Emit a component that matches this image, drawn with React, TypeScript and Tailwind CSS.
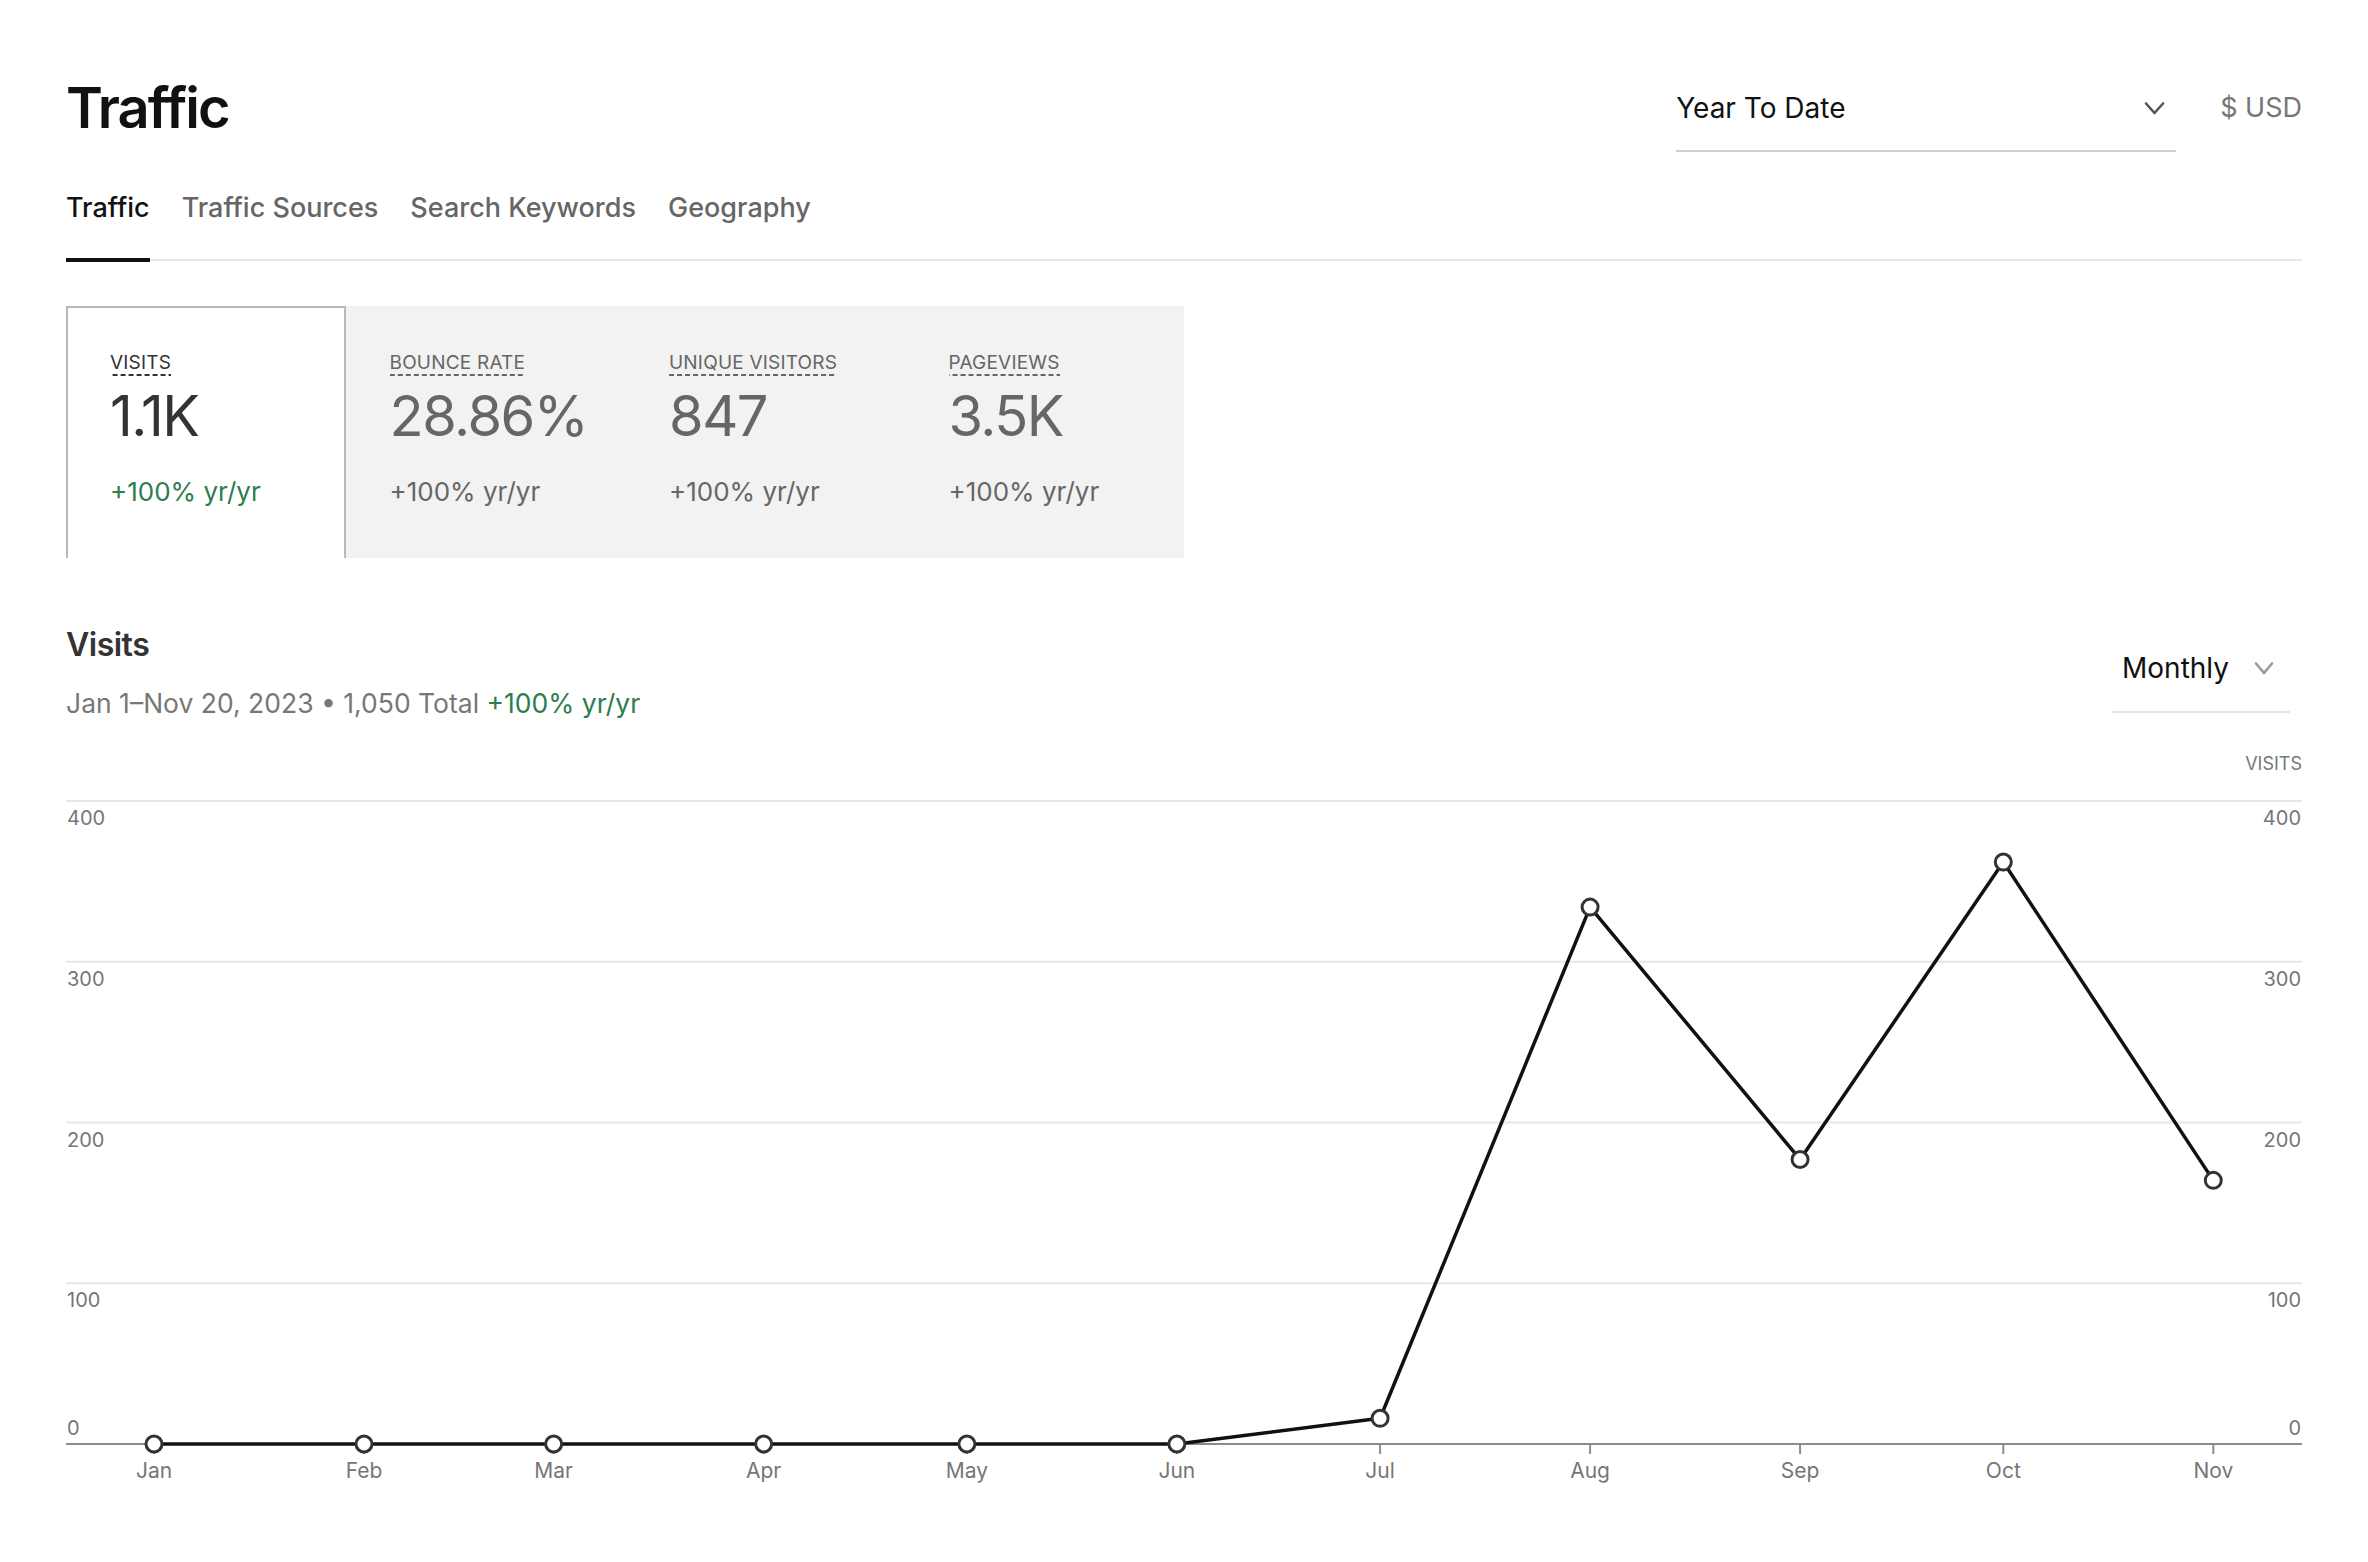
const tabs = ["Traffic", "Traffic Sources", "Search Keywords", "Geography"];

const stats = [
    { label: "Visits", value: "1.1K", change: "+100% yr/yr" },
    { label: "Bounce Rate", value: "28.86%", change: "+100% yr/yr" },
    { label: "Unique Visitors", value: "847", change: "+100% yr/yr" },
    { label: "Pageviews", value: "3.5K", change: "+100% yr/yr" },
];

// day offset from Jan 1 and visits per month
const points = [
    { m: "Jan", d: 0, v: 0 },
    { m: "Feb", d: 31, v: 0 },
    { m: "Mar", d: 59, v: 0 },
    { m: "Apr", d: 90, v: 0 },
    { m: "May", d: 120, v: 0 },
    { m: "Jun", d: 151, v: 0 },
    { m: "Jul", d: 181, v: 16 },
    { m: "Aug", d: 212, v: 334 },
    { m: "Sep", d: 243, v: 177 },
    { m: "Oct", d: 273, v: 362 },
    { m: "Nov", d: 304, v: 164 },
];

const W = 2236;
const AXIS_Y = 650;
const x = (d: number) => 88 + d * 6.774;
const y = (v: number) => AXIS_Y - v * 1.6075;

function Chevron({ color, w }: { color: string; w: number }) {
    return (
        <svg width={w} height={15} viewBox={`0 0 ${w} 15`} fill="none">
            <polyline
                points={`2,2.5 ${w / 2},12 ${w - 2},2.5`}
                stroke={color}
                strokeWidth={2.6}
                strokeLinecap="round"
                strokeLinejoin="round"
            />
        </svg>
    );
}

function VisitsChart() {
    const path = points.map((p, i) => `${i ? "L" : "M"}${x(p.d)},${y(p.v)}`).join(" ");
    return (
        <svg className="mt-[21px] block" width={W} height={710} fontFamily="Inter, sans-serif">
            {[400, 300, 200, 100].map((v) => (
                <g key={v}>
                    <line x1={0} x2={W} y1={y(v)} y2={y(v)} stroke="#e6e6e6" strokeWidth={2} />
                    <text x={1} y={y(v) + 24} fontSize={20} fill="#767676">
                        {v}
                    </text>
                    <text x={W - 1} y={y(v) + 24} fontSize={20} fill="#767676" textAnchor="end">
                        {v}
                    </text>
                </g>
            ))}
            <text x={1} y={AXIS_Y - 9} fontSize={20} fill="#767676">
                0
            </text>
            <text x={W - 1} y={AXIS_Y - 9} fontSize={20} fill="#767676" textAnchor="end">
                0
            </text>
            <line x1={0} x2={W} y1={AXIS_Y} y2={AXIS_Y} stroke="#8c8c8c" strokeWidth={2} />
            {points.map((p) => (
                <g key={p.m}>
                    <line x1={x(p.d)} x2={x(p.d)} y1={AXIS_Y} y2={AXIS_Y + 10} stroke="#8c8c8c" strokeWidth={2} />
                    <text x={x(p.d)} y={AXIS_Y + 34} fontSize={21} fill="#767676" textAnchor="middle">
                        {p.m}
                    </text>
                </g>
            ))}
            <path d={path} fill="none" stroke="#111" strokeWidth={3.5} strokeLinejoin="round" />
            {points.map((p) => (
                <circle key={p.m} cx={x(p.d)} cy={y(p.v)} r={8} fill="#fff" stroke="#333" strokeWidth={3} />
            ))}
        </svg>
    );
}

export default function App() {
    return (
        <div className="min-h-screen bg-white px-[66px] pt-[76px] font-['Inter',sans-serif] text-[#111]">
            <header className="flex items-start justify-between">
                <h1 className="text-[56px] leading-[64px] font-semibold tracking-[-2px] text-[#111]">
                    Traffic
                </h1>
                <div className="mt-[14px] flex items-start gap-[44px]">
                    <div className="flex w-[500px] items-center justify-between border-b-2 border-[#d0d0d0] pb-[24px] pr-[11px]">
                        <span className="text-[28px] leading-[36px] text-[#111]">Year To Date</span>
                        <Chevron color="#555" w={21} />
                    </div>
                    <span className="text-[27px] leading-[36px] text-[#777]">$ USD</span>
                </div>
            </header>

            <nav className="mt-[42px] flex gap-[32px] border-b-2 border-[#e6e6e6]">
                {tabs.map((t, i) => (
                    <div
                        key={t}
                        className={
                            i === 0
                                ? "-mb-[3px] border-b-4 border-[#111] pb-[37px] text-[27px] leading-[27px] font-medium text-[#111]"
                                : "-mb-[3px] border-b-4 border-transparent pb-[37px] text-[27px] leading-[27px] font-medium text-[#666]"
                        }
                    >
                        {t}
                    </div>
                ))}
            </nav>

            <div className="mt-[45px] grid w-[1118px] grid-cols-4 bg-[#f2f2f2]">
                {stats.map((s, i) => (
                    <div
                        key={s.label}
                        className={
                            i === 0
                                ? "h-[252px] border-2 border-b-0 border-[#b8b8b8] bg-white pl-[42px] pt-[45px] text-[#333]"
                                : "h-[252px] border-2 border-b-0 border-transparent pl-[42px] pt-[45px] text-[#666]"
                        }
                    >
                        <span className="block w-fit bg-[linear-gradient(to_right,currentColor_62%,transparent_62%)] bg-[length:8px_2px] bg-bottom bg-repeat-x pb-[4px] text-[19px] leading-[19px] uppercase tracking-[0.2px]">
                            {s.label}
                        </span>
                        <div className="mt-[12px] text-[56px] leading-[56px] tracking-[-1.5px]">{s.value}</div>
                        <div
                            className={
                                i === 0
                                    ? "mt-[35px] text-[26px] leading-[26px] text-[#2e7d4f]"
                                    : "mt-[35px] text-[26px] leading-[26px]"
                            }
                        >
                            {s.change}
                        </div>
                    </div>
                ))}
            </div>

            <section className="mt-[71px] flex items-start justify-between">
                <div>
                    <h2 className="text-[32px] leading-[32px] font-semibold tracking-[-0.5px] text-[#333]">Visits</h2>
                    <p className="mt-[29px] text-[26.5px] leading-[26px] text-[#777]">
                        Jan 1–Nov 20, 2023 • 1,050 Total <span className="text-[#2e7d4f]">+100% yr/yr</span>
                    </p>
                </div>
                <div className="mr-[12px] mt-[21px] flex w-[179px] items-center justify-between border-b-2 border-[#e6e6e6] pb-[25px] pl-[11px] pr-[16px]">
                    <span className="text-[28px] leading-[36px] text-[#111]">Monthly</span>
                    <Chevron color="#9a9a9a" w={20} />
                </div>
            </section>

            <div className="mt-[39px] text-right text-[18px] leading-[18px] text-[#777]">VISITS</div>
            <VisitsChart />
        </div>
    );
}
